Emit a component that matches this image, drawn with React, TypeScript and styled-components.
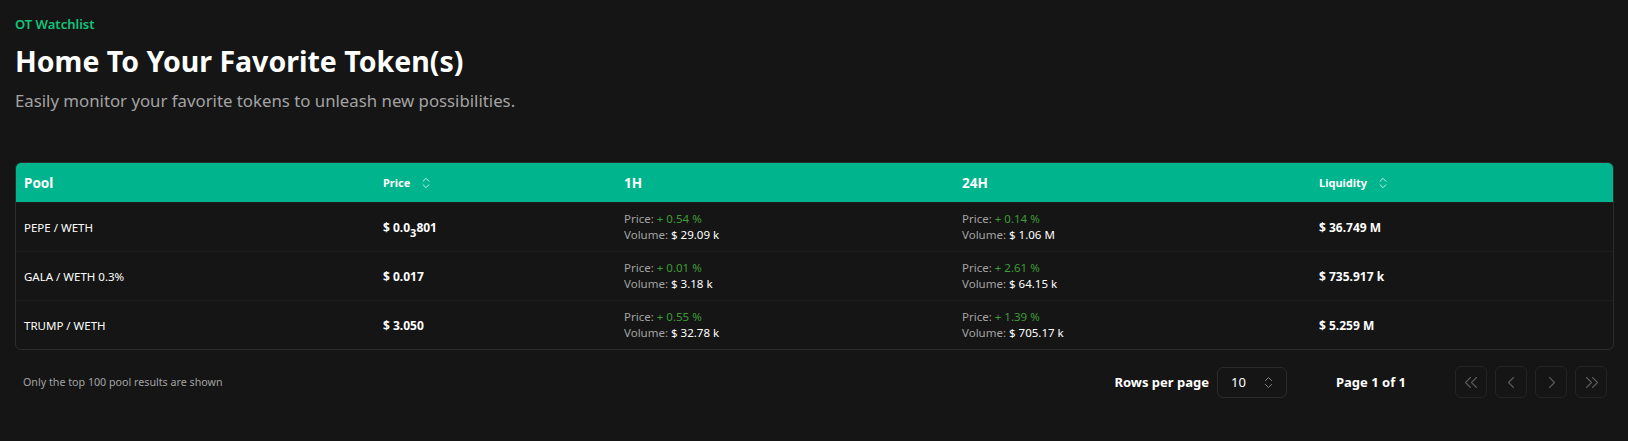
import React from 'react';
import styled, {createGlobalStyle} from 'styled-components';
import {ChevronsUpDown} from 'lucide-react';

const GlobalStyle = createGlobalStyle`
  html, body {
    margin: 0;
    background: #151515;
    color: #ffffff;
    font-family: 'Noto Sans', 'Open Sans', sans-serif;
  }
`;

const Page = styled.div`
  padding: 15px 14px 40px 15px;
`;

const Eyebrow = styled.div`
  color: #12c47c;
  font-size: 13px;
  font-weight: 600;
  line-height: 18px;
`;

const Title = styled.h1`
  margin: 10px 0 0;
  font-size: 28.5px;
  font-weight: 700;
  line-height: 36px;
`;

const Subtitle = styled.p`
  margin: 10px 0 0;
  color: #a3a3a3;
  font-size: 16.8px;
  line-height: 24px;
`;

const TableFrame = styled.div`
  margin-top: 49px;
  border: 1px solid #2c2c2c;
  border-radius: 6px;
  overflow: hidden;
`;

const Row = styled.div<{header?: boolean}>`
  display: grid;
  grid-template-columns: 359px 241px 338px 357px 1fr;
  align-items: center;
  box-sizing: border-box;
  height: ${p => (p.header ? 39 : 49)}px;
  background: ${p => (p.header ? '#00b48d' : 'transparent')};
  border-top: ${p => (p.header ? 'none' : '1px solid #1e1e1e')};
`;

const HeadCell = styled.div<{small?: boolean}>`
  display: flex;
  align-items: center;
  gap: 9px;
  padding-left: 8px;
  font-size: ${p => (p.small ? 11 : 13.5)}px;
  font-weight: 700;
  color: #ffffff;
`;

const SortIcon = styled(ChevronsUpDown)`
  width: 14px;
  height: 14px;
  color: #d8f3ea;
`;

const Cell = styled.div<{bold?: boolean}>`
  padding-left: 8px;
  font-size: ${p => (p.bold ? 12 : 11.5)}px;
  font-weight: ${p => (p.bold ? 700 : 400)};
  color: #ffffff;
`;

const Sub = styled.sub`
  font-size: 11px;
  vertical-align: -5px;
  line-height: 0;
`;

const Stat = styled.div`
  padding-left: 8px;
  font-size: 11.5px;
  line-height: 16px;
`;

const StatLabel = styled.span`
  color: #a3a3a3;
`;

const Change = styled.span`
  color: #3d9c35;
`;

const Footer = styled.div`
  display: flex;
  align-items: center;
  justify-content: space-between;
  margin-top: 16px;
  padding: 0 7px 0 8px;
`;

const Note = styled.div`
  font-size: 10.7px;
  color: #a3a3a3;
`;

const Pager = styled.div`
  display: flex;
  align-items: center;
`;

const PagerLabel = styled.span`
  font-size: 13px;
  font-weight: 700;
  color: #ffffff;
`;

const SelectBox = styled.div`
  display: flex;
  align-items: center;
  justify-content: space-between;
  box-sizing: border-box;
  width: 70px;
  height: 31px;
  margin-left: 8px;
  padding: 0 14px 0 13px;
  border: 1px solid #2a2a2a;
  border-radius: 6px;
  font-size: 13px;
  color: #ffffff;
`;

const SelectIcon = styled(ChevronsUpDown)`
  width: 15px;
  height: 15px;
  margin-right: -4px;
  color: #8a8a8a;
`;

const PageInfo = styled(PagerLabel)`
  margin-left: 49px;
  margin-right: 49px;
`;

const NavButtons = styled.div`
  display: flex;
  gap: 8px;
`;

const NavButton = styled.button`
  display: flex;
  align-items: center;
  justify-content: center;
  box-sizing: border-box;
  width: 32px;
  height: 32px;
  padding: 0;
  background: transparent;
  border: 1px solid #242424;
  border-radius: 6px;
  color: #5c5c5c;
  cursor: not-allowed;
`;

const Arrow: React.FC<{d: string}> = ({d}) => (
  <svg width="15" height="15" viewBox="0 0 15 15" fill="none">
    <path d={d} stroke="currentColor" strokeWidth="1.1" strokeLinecap="round" strokeLinejoin="round" />
  </svg>
);

const arrows = {
  first: 'M6.5 2.5 L1.5 7.5 L6.5 12.5 M12.5 2.5 L7.5 7.5 L12.5 12.5',
  prev: 'M9.5 2.5 L4.5 7.5 L9.5 12.5',
  next: 'M5.5 2.5 L10.5 7.5 L5.5 12.5',
  last: 'M2.5 2.5 L7.5 7.5 L2.5 12.5 M8.5 2.5 L13.5 7.5 L8.5 12.5',
};

type Stats = {change: string; volume: string};

type PoolRow = {
  pool: string;
  price: React.ReactNode;
  h1: Stats;
  h24: Stats;
  liquidity: string;
};

const rows: PoolRow[] = [
  {
    pool: 'PEPE / WETH',
    price: (
      <>
        $ 0.0<Sub>3</Sub>801
      </>
    ),
    h1: {change: '+ 0.54 %', volume: '$ 29.09 k'},
    h24: {change: '+ 0.14 %', volume: '$ 1.06 M'},
    liquidity: '$ 36.749 M',
  },
  {
    pool: 'GALA / WETH 0.3%',
    price: '$ 0.017',
    h1: {change: '+ 0.01 %', volume: '$ 3.18 k'},
    h24: {change: '+ 2.61 %', volume: '$ 64.15 k'},
    liquidity: '$ 735.917 k',
  },
  {
    pool: 'TRUMP / WETH',
    price: '$ 3.050',
    h1: {change: '+ 0.55 %', volume: '$ 32.78 k'},
    h24: {change: '+ 1.39 %', volume: '$ 705.17 k'},
    liquidity: '$ 5.259 M',
  },
];

const StatCell: React.FC<{stats: Stats}> = ({stats}) => (
  <Stat>
    <div>
      <StatLabel>Price:</StatLabel> <Change>{stats.change}</Change>
    </div>
    <div>
      <StatLabel>Volume:</StatLabel> {stats.volume}
    </div>
  </Stat>
);

export default function App() {
  return (
    <Page>
      <GlobalStyle />
      <Eyebrow>OT Watchlist</Eyebrow>
      <Title>Home To Your Favorite Token(s)</Title>
      <Subtitle>Easily monitor your favorite tokens to unleash new possibilities.</Subtitle>

      <TableFrame>
        <Row header>
          <HeadCell>Pool</HeadCell>
          <HeadCell small>
            Price <SortIcon strokeWidth={1.6} />
          </HeadCell>
          <HeadCell>1H</HeadCell>
          <HeadCell>24H</HeadCell>
          <HeadCell small>
            Liquidity <SortIcon strokeWidth={1.6} />
          </HeadCell>
        </Row>
        {rows.map(r => (
          <Row key={r.pool}>
            <Cell>{r.pool}</Cell>
            <Cell bold>{r.price}</Cell>
            <StatCell stats={r.h1} />
            <StatCell stats={r.h24} />
            <Cell bold>{r.liquidity}</Cell>
          </Row>
        ))}
      </TableFrame>

      <Footer>
        <Note>Only the top 100 pool results are shown</Note>
        <Pager>
          <PagerLabel>Rows per page</PagerLabel>
          <SelectBox>
            10 <SelectIcon strokeWidth={1.5} />
          </SelectBox>
          <PageInfo>Page 1 of 1</PageInfo>
          <NavButtons>
            <NavButton disabled>
              <Arrow d={arrows.first} />
            </NavButton>
            <NavButton disabled>
              <Arrow d={arrows.prev} />
            </NavButton>
            <NavButton disabled>
              <Arrow d={arrows.next} />
            </NavButton>
            <NavButton disabled>
              <Arrow d={arrows.last} />
            </NavButton>
          </NavButtons>
        </Pager>
      </Footer>
    </Page>
  );
}
